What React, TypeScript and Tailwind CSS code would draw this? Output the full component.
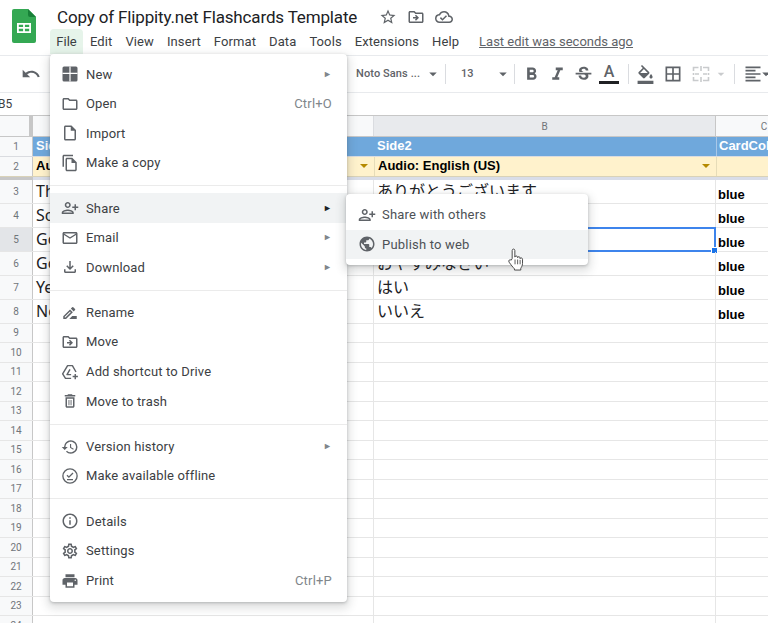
import React from "react";
import {
  MdOutlineInsertDriveFile, MdOutlineFolder, MdOutlineFileCopy, MdOutlineFileDownload,
  MdOutlineDriveFileRenameOutline, MdOutlineDriveFileMove, MdHistory, MdInfoOutline,
  MdOutlineSettings, MdPrint, MdPublic, MdUndo, MdStarBorder, MdFormatBold, MdFormatItalic,
  MdStrikethroughS, MdFormatColorFill, MdBorderAll, MdFormatAlignLeft, MdArrowDropDown,
  MdOutlineCloudDone, MdMailOutline,
} from "react-icons/md";

function PersonAdd({ size = 18 }: { size?: number }) {
  return (
    <svg width={size} height={size} viewBox="0 0 24 24" fill="currentColor">
      <g transform="translate(24,0) scale(-1,1)">
        <path d="M15 12c2.21 0 4-1.79 4-4s-1.79-4-4-4-4 1.79-4 4 1.79 4 4 4zm0-6c1.1 0 2 .9 2 2s-.9 2-2 2-2-.9-2-2 .9-2 2-2zm0 8c-2.67 0-8 1.34-8 4v2h16v-2c0-2.66-5.33-4-8-4zm-6 4c.22-.72 3.31-2 6-2 2.7 0 5.8 1.29 6 2H9zm-3-3v-3h3v-2H6V7H4v3H1v2h3v3h2z" />
      </g>
    </svg>
  );
}

function NewIcon() {
  return (
    <svg width={18} height={18} viewBox="0 0 18 18">
      <rect x="1.5" y="1.5" width="15" height="15" rx="1.5" fill="#5f6368" />
      <path d="M8.4 1.5h1.2v6.3h6.9V9H9.6v7.5H8.4V9h-6.9V7.8h6.9z" fill="#fff" />
    </svg>
  );
}

function DriveAdd() {
  return (
    <svg width={18} height={18} viewBox="0 0 24 24" fill="none" stroke="#5f6368" strokeWidth="1.9" strokeLinejoin="round">
      <path d="M13.5 20.5H6L2.2 14.5 8.8 3.5h6.4L20 12" />
      <path d="M12 8.5l-4 7h5.5" />
      <path d="M19 14.5v7M15.5 18h7" />
    </svg>
  );
}

function Trash() {
  return (
    <svg width={18} height={18} viewBox="0 0 24 24" fill="#5f6368">
      <path d="M6 19c0 1.1.9 2 2 2h8c1.1 0 2-.9 2-2V7H6v12zM8 9h8v10H8V9zm7.5-5l-1-1h-5l-1 1H5v2h14V4z" />
      <path d="M10 10.5h1.2v7H10zM12.8 10.5H14v7h-1.2z" />
    </svg>
  );
}

function Offline() {
  return (
    <svg width={18} height={18} viewBox="0 0 24 24" fill="none" stroke="#5f6368" strokeWidth="1.8">
      <circle cx="12" cy="12" r="9.5" />
      <path d="M8 11l2.5 2.5L16 8M8 16.8h8" />
    </svg>
  );
}

function Hand() {
  return (
    <svg width={18} height={23} viewBox="0 0 18 24">
      <path
        d="M5 11V2.6c0-2 2.8-2 2.8 0V9.5c.2-1.6 2.7-1.6 2.8 0v.6c.3-1.4 2.6-1.3 2.7.2v.8c.4-1.2 2.4-1 2.5.6v4.3c0 2.6-1.2 3.9-1.8 5.2V23H7.4v-1.2C6 20.2 3.7 17.6 1.8 14.8.6 13 2.6 11.4 4 12.7z"
        fill="#fff" stroke="#444" strokeWidth="1" strokeLinejoin="round"
      />
      <path d="M8 12v5M10.7 12v5M13.3 12.4V17" stroke="#444" strokeWidth="0.9" fill="none" />
    </svg>
  );
}

function MergeIcon() {
  return (
    <svg width={18} height={18} viewBox="0 0 18 18" fill="none" stroke="#c9cbcd" strokeWidth="1.6">
      <path d="M1.5 6V2.5h5M11 2.5h5.5V6M1.5 12v3.5h5M11 15.5h5.5V12M1.5 8v2M16.5 8v2" />
      <path d="M3 9h4M15 9h-4M9 1v5M9 12v5" />
    </svg>
  );
}

type Item = { icon: React.ReactNode; label: string; right?: string; sub?: boolean; hi?: boolean };
const ic = 18;
const groups: Item[][] = [
  [
    { icon: <NewIcon />, label: "New", sub: true },
    { icon: <MdOutlineFolder size={ic} />, label: "Open", right: "Ctrl+O" },
    { icon: <MdOutlineInsertDriveFile size={ic} />, label: "Import" },
    { icon: <MdOutlineFileCopy size={ic} />, label: "Make a copy" },
  ],
  [
    { icon: <PersonAdd />, label: "Share", sub: true, hi: true },
    { icon: <MdMailOutline size={ic} />, label: "Email", sub: true },
    { icon: <MdOutlineFileDownload size={ic} />, label: "Download", sub: true },
  ],
  [
    { icon: <MdOutlineDriveFileRenameOutline size={ic} />, label: "Rename" },
    { icon: <MdOutlineDriveFileMove size={ic} />, label: "Move" },
    { icon: <DriveAdd />, label: "Add shortcut to Drive" },
    { icon: <Trash />, label: "Move to trash" },
  ],
  [
    { icon: <MdHistory size={ic} />, label: "Version history", sub: true },
    { icon: <Offline />, label: "Make available offline" },
  ],
  [
    { icon: <MdInfoOutline size={ic} />, label: "Details" },
    { icon: <MdOutlineSettings size={ic} />, label: "Settings" },
    { icon: <MdPrint size={ic} />, label: "Print", right: "Ctrl+P" },
  ],
];

function MenuRow({ item }: { item: Item }) {
  return (
    <div className={`flex h-[29.6px] items-center pl-[8px] pr-[15px] ${item.hi ? "bg-[#f1f3f4]" : ""}`}>
      <span className="flex w-[24px] justify-center text-[#5f6368]">{item.icon}</span>
      <span className="ml-[4px] flex-1 text-[13px] tracking-[0.15px] text-[#3c4043]">{item.label}</span>
      {item.right && <span className="text-[13px] tracking-[0.2px] text-[#80868b]">{item.right}</span>}
      {item.sub && (
        <span className={`text-[9px] leading-none ${item.hi ? "text-[#202124]" : "text-[#80868b]"}`}>►</span>
      )}
    </div>
  );
}

function FileMenu() {
  return (
    <div className="absolute left-[50px] top-[54px] z-20 w-[297px] rounded-[4px] bg-white pb-[6.5px] pt-[5.5px] shadow-[0_1px_3px_rgba(60,64,67,0.3),0_4px_8px_3px_rgba(60,64,67,0.15)]">
      {groups.map((g, i) => (
        <div key={i}>
          {i > 0 && (
            <div className="flex h-[15.6px] items-center">
              <div className="h-px w-full bg-[#ebebeb]" />
            </div>
          )}
          {g.map((it) => (
            <MenuRow key={it.label} item={it} />
          ))}
        </div>
      ))}
    </div>
  );
}

function SubMenu() {
  return (
    <div className="absolute left-[346px] top-[194px] z-20 w-[242px] rounded-[4px] bg-white py-[6px] shadow-[0_1px_3px_rgba(60,64,67,0.3),0_4px_8px_3px_rgba(60,64,67,0.15)]">
      <div className="flex h-[29.6px] items-center pl-[9px]">
        <span className="flex w-[24px] justify-center text-[#5f6368]"><PersonAdd /></span>
        <span className="ml-[3px] text-[13px] tracking-[0.2px] text-[#4d5156]">Share with others</span>
      </div>
      <div className="flex h-[29.6px] items-center bg-[#f1f3f4] pl-[9px]">
        <span className="flex w-[24px] justify-center text-[#5f6368]"><MdPublic size={18} /></span>
        <span className="ml-[3px] text-[13px] tracking-[0.2px] text-[#4d5156]">Publish to web</span>
      </div>
    </div>
  );
}

function Sep({ className }: { className: string }) {
  return <div className={`h-[20px] w-px shrink-0 bg-[#dadce0] ${className}`} />;
}

function Toolbar() {
  return (
    <div className="flex h-[38px] items-center border-y border-[#e8eaed] text-[#5f6368] [&>svg]:shrink-0">
      <MdUndo size={20} className="ml-[21px]" />
      <span className="ml-[315px] w-[68px] shrink-0 text-[11px] font-medium tracking-[0.1px]">Noto Sans ...</span>
      <MdArrowDropDown size={18} />
      <Sep className="ml-[3px]" />
      <span className="ml-[15px] w-[30px] shrink-0 text-[11px] font-medium">13</span>
      <MdArrowDropDown size={18} className="ml-[3px]" />
      <Sep className="ml-[2px]" />
      <MdFormatBold size={21} className="ml-[5.5px]" />
      <MdFormatItalic size={21} className="ml-[5px]" />
      <MdStrikethroughS size={21} className="ml-[5px]" />
      <span className="ml-[5px] flex w-[21px] shrink-0 flex-col items-center">
        <span className="text-[16px] font-medium leading-[15px]">A</span>
        <span className="mt-[2px] h-[3px] w-[20px] bg-[#202124]" />
      </span>
      <Sep className="ml-[8px]" />
      <MdFormatColorFill size={19} className="ml-[7px]" />
      <MdBorderAll size={20} className="ml-[8.5px]" />
      <span className="ml-[9px] shrink-0"><MergeIcon /></span>
      <MdArrowDropDown size={16} className="ml-[3px] text-[#c9cbcd]" />
      <Sep className="ml-[4.5px]" />
      <MdFormatAlignLeft size={20} className="ml-[8px]" />
      <MdArrowDropDown size={18} className="-ml-[6px]" />
    </div>
  );
}

const sheetFont = '"Noto Sans", "Noto Sans CJK JP", sans-serif';
const arial = "font-['Liberation_Sans',sans-serif] text-[13px] font-bold";

const rows = [
  { n: 3, a: "Thank you", b: "ありがとうございます" },
  { n: 4, a: "Sorry", b: "すみません" },
  { n: 5, a: "Good morning", b: "おはようございます", sel: true },
  { n: 6, a: "Good night", b: "おやすみなさい" },
  { n: 7, a: "Yes", b: "はい" },
  { n: 8, a: "No", b: "いいえ" },
];
const empties = Array.from({ length: 16 }, (_, i) => i + 9);

function RowNum({ n, active }: { n: number; active?: boolean }) {
  return (
    <div
      className={`flex w-[33px] shrink-0 items-center justify-center border-r-[1.5px] border-r-[#c7c7c7] text-[10px] text-[#70757a] ${
        active ? "bg-[#e3e5e8]" : "bg-[#f8f9fa]"
      }`}
    >
      {n}
    </div>
  );
}

function Grid() {
  const caret = <span className="h-0 w-0 border-x-[4px] border-t-[4px] border-x-transparent border-t-[#b58900]" />;
  return (
    <div className="text-[#202124]">
      <div className="flex h-[22px] border-y border-[#c7c7c7] text-[10px] text-[#70757a]">
        <div className="w-[33px] shrink-0 border-r-[4px] border-r-[#c7c7c7] bg-[#f8f9fa]" />
        <div className="w-[341px] shrink-0 border-r border-[#dadce0] bg-[#f8f9fa]" />
        <div className="flex w-[342px] shrink-0 items-center justify-center border-r border-[#c7c7c7] bg-[#e8eaed]">B</div>
        <div className="flex w-[96px] shrink-0 items-center justify-center bg-[#f8f9fa]">C</div>
      </div>
      <div className="flex h-[19.5px] border-b border-[#dadce0]">
        <RowNum n={1} />
        <div className={`w-[341px] shrink-0 bg-[#6fa8dc] pl-[3px] leading-[18px] text-white ${arial}`}>Side1</div>
        <div className={`w-[342px] shrink-0 bg-[#6fa8dc] pl-[3px] leading-[18px] text-white ${arial}`}>Side2</div>
        <div className={`w-[96px] shrink-0 border-l border-[#a9c8e8] bg-[#6fa8dc] pl-[2px] leading-[18px] text-white ${arial}`}>CardColor</div>
      </div>
      <div className="flex h-[20px] border-b border-[#d9d2b8]">
        <RowNum n={2} />
        <div className={`flex w-[341px] shrink-0 items-center justify-between bg-[#fff2cc] pl-[3px] pr-[6px] ${arial}`}>
          <span className="text-black">Audio: English (US)</span>
          {caret}
        </div>
        <div className={`flex w-[342px] shrink-0 items-center justify-between border-l border-[#e6dcb8] bg-[#fff2cc] pl-[3px] pr-[6px] ${arial}`}>
          <span className="text-black">Audio: English (US)</span>
          {caret}
        </div>
        <div className="flex-1 border-l border-[#e6dcb8] bg-[#fff2cc]" />
      </div>
      <div className="flex h-[3px]">
        <div className="w-[33px] bg-[#c7c7c7]" />
        <div className="flex-1 bg-[#d9dde8]" />
      </div>
      {rows.map((r) => (
        <div key={r.n} className="flex h-[24px] border-b-[1.5px] border-[#e6e6e6]">
          <RowNum n={r.n} active={r.sel} />
          <div className="flex w-[341px] shrink-0 items-center border-r border-[#e6e6e6] pl-[3px] text-[16px]" style={{ fontFamily: sheetFont }}>
            {r.a}
          </div>
          <div className="relative flex w-[342px] shrink-0 items-center border-r border-[#e6e6e6] pl-[3px] text-[16px]" style={{ fontFamily: sheetFont }}>
            {r.b}
            {r.sel && (
              <span className="absolute -bottom-[1.5px] -right-px left-0 -top-px border-2 border-[#3d84ec]">
                <span className="absolute -bottom-[4px] -right-[4px] h-[7px] w-[7px] border border-white bg-[#1a73e8]" />
              </span>
            )}
          </div>
          <div className={`flex flex-1 items-end pb-[1px] pl-[2px] leading-[15px] text-black ${arial}`}>blue</div>
        </div>
      ))}
      {empties.map((n) => (
        <div key={n} className="flex h-[19.5px] border-b-[1.5px] border-[#e6e6e6]">
          <RowNum n={n} />
          <div className="w-[341px] shrink-0 border-r border-[#e6e6e6]" />
          <div className="w-[342px] shrink-0 border-r border-[#e6e6e6]" />
          <div className="flex-1" />
        </div>
      ))}
    </div>
  );
}

export default function App() {
  const menus = ["Edit", "View", "Insert", "Format", "Data", "Tools", "Extensions", "Help"];
  return (
    <div className="relative h-[623px] w-[768px] overflow-hidden bg-white font-['Roboto',sans-serif]">
      <div className="flex h-[55px]">
        <div className="ml-[12px] mt-[9px] h-[34px] w-[24px]">
          <svg width="24" height="34" viewBox="0 0 24 34">
            <path d="M2 0h14l8 8v24a2 2 0 0 1-2 2H2a2 2 0 0 1-2-2V2a2 2 0 0 1 2-2z" fill="#34a853" />
            <path d="M16 0l8 8h-6a2 2 0 0 1-2-2z" fill="#188038" />
            <path d="M5 14h14v10H5zm1.8 1.8v2.2h4.3v-2.2zm6.1 0v2.2h4.3v-2.2zm-6.1 4v2.4h4.3v-2.4zm6.1 0v2.4h4.3v-2.4z" fill="#fff" fillRule="evenodd" />
          </svg>
        </div>
        <div className="ml-[14px] flex-1">
          <div className="flex h-[29px] items-center pt-[5px]">
            <span className="ml-[7px] text-[17px] leading-[18px] tracking-[-0.15px] text-[#202124]">Copy of Flippity.net Flashcards Template</span>
            <span className="ml-[22px] flex items-center gap-[10px] text-[#5f6368]">
              <MdStarBorder size={18} />
              <MdOutlineDriveFileMove size={18} />
              <MdOutlineCloudDone size={18} />
            </span>
          </div>
          <div className="flex h-[26px] items-start text-[13px] text-[#3c4043]">
            <span className="flex h-[25px] w-[33px] items-center justify-center rounded-t-[4px] bg-[#e6f4ea]">File</span>
            <span className="ml-[7px] flex gap-[13px] pt-[3px] tracking-[0.1px]">
              {menus.map((m) => (
                <span key={m}>{m}</span>
              ))}
            </span>
            <span className="ml-[20px] pt-[3px] text-[#5f6368] underline">Last edit was seconds ago</span>
          </div>
        </div>
      </div>
      <Toolbar />
      <div className="-ml-[2px] flex h-[22px] items-center text-[12px] text-[#3c4043]">B5</div>
      <Grid />
      <FileMenu />
      <SubMenu />
      <div className="absolute left-[507px] top-[248px] z-30"><Hand /></div>
    </div>
  );
}
